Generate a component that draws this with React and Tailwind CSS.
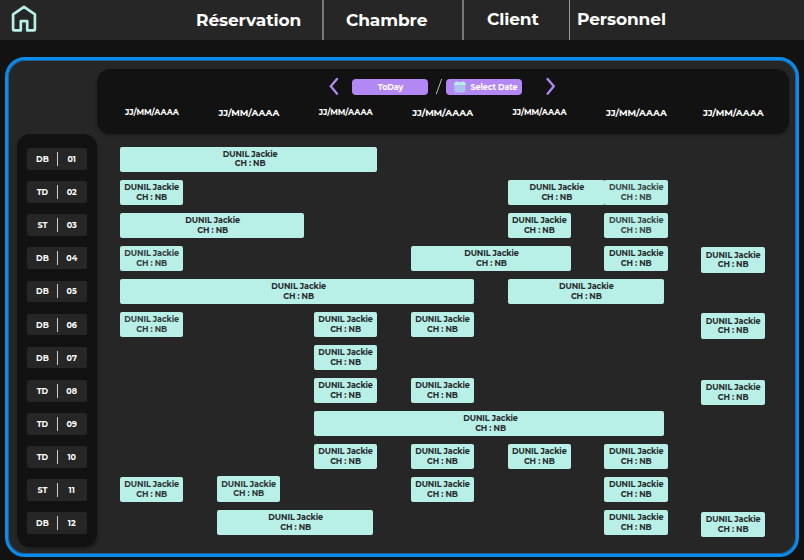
import React from "react";

const ROOMS = ["DB", "TD", "ST", "DB", "DB", "DB", "DB", "TD", "TD", "TD", "ST", "DB"];

// Each booking: [first day column, width, vertical shift, text centre shift, text opacity]
const BOOKINGS = [
  [[1, 257.2, 0, 3]],
  [[1, 63.3], [5, 97.5, 0, 1], [6, 63.5, 0, 0, 0.85]],
  [[1, 184.3, 0, 1], [5, 63.5], [6, 63.5, 0, 0, 0.85]],
  [[1, 63.3, 0, 0, 0.9], [4, 160.5, 0, 1], [6, 63.5], [7, 63.5, 1.7]],
  [[1, 354.2, 0, 3], [5, 156.5, 0, 1]],
  [[1, 63.3, 0, 0, 0.9], [3, 63.5], [4, 63.5], [7, 63.5, 1.7]],
  [[3, 63.5]],
  [[3, 63.5], [4, 63.5], [7, 63.5, 1.7]],
  [[3, 350.5, 0, 3]],
  [[3, 63.5], [4, 63.5], [5, 63.5], [6, 63.5]],
  [[1, 63.3, 0, 0, 0.95], [2, 63.5, -0.6, 0, 0.95], [4, 63.5], [6, 63.5]],
  [[2, 156.5, 0, 1], [6, 63.5], [7, 63.5, 1.7]],
];

function Booking({ booking }) {
  const [column, width, dy = 0, shift = 0, opacity = 1] = booking;
  return (
    <div
      className="row-start-1 flex h-[25.4px] flex-col items-center rounded-[2px] bg-[#b8efe7] pt-[3.4px] text-[8px] leading-[9.6px] font-bold tracking-[-0.1px] whitespace-nowrap text-[#262b2a]"
      style={{ gridColumnStart: column, width, marginTop: dy }}
    >
      <span style={{ opacity, marginLeft: shift }}>DUNIL Jackie</span>
      <span style={{ opacity, marginLeft: shift }}>CH : NB</span>
    </div>
  );
}

function Chevron({ flip }) {
  return (
    <svg className="h-[18px] w-[10px]" viewBox="0 0 10 18" fill="none" stroke="#b388f5" strokeWidth="2.3" strokeLinecap="round">
      <path d={flip ? "M1.6 1.9L7.8 9.3L1.6 16.7" : "M8 1.9L1.8 9.3L8 16.7"} />
    </svg>
  );
}

function CalendarIcon() {
  return (
    <svg className="h-[12px] w-[12px]" viewBox="0 0 12 12">
      <rect x=".3" y="1.2" width="11.2" height="10.3" rx="1.3" fill="#b2bdee" />
      <path d="M.3 4V2.5Q.3 1.2 1.6 1.2H10.2Q11.5 1.2 11.5 2.5V4Z" fill="#b8efe7" />
      <path d="M3 .2V2M8.8 .2V2" stroke="#b8efe7" strokeWidth="1" />
      <path d="M2.4 6H10M2.4 8H10M2.4 10H10" stroke="#9fdde5" strokeWidth="1" strokeDasharray="1 1.2" />
    </svg>
  );
}

export default function App() {
  return (
    <div className="flex h-[560px] w-[804px] flex-col overflow-hidden bg-[#121212] font-['Montserrat','Inter',sans-serif] text-white">
      <header className="flex h-[40px] shrink-0 bg-[#262626] text-[17px] leading-[41px] font-bold tracking-[-0.1px] whitespace-nowrap">
        <svg className="mt-[5px] ml-[11px] h-[27px] w-[26px] shrink-0" viewBox="0 0 26 27" fill="none" stroke="#b8efe7" strokeWidth="2.7" strokeLinejoin="round">
          <path d="M2.1 9.3L13 1.8L23.9 9.3V24.4Q23.9 25.4 22.9 25.4H16.2V16.2H9.8V25.4H3.1Q2.1 25.4 2.1 24.4Z" />
        </svg>
        <nav className="flex">
          <div className="w-[287px] border-r-2 border-[#777] pl-[159px]">Réservation</div>
          <div className="w-[140px] border-r-2 border-[#777] pl-[22px]">Chambre</div>
          <div className="w-[106px] border-r border-[#999] pl-[23px] leading-[39px]">Client</div>
          <div className="pl-[7px] leading-[39px]">Personnel</div>
        </nav>
      </header>

      <main className="mt-[17px] ml-[5px] flex h-[500px] w-[794px] flex-col rounded-[20px] border-[3px] border-[#0b8bea] bg-[#262626] shadow-[inset_0_0_0_1px_#176099]">
        <div className="mt-[9px] ml-[89px] flex h-[65px] w-[692px] shrink-0 flex-col rounded-[13px] bg-[#121212] shadow-[0_2px_3px_rgba(0,0,0,0.25)]">
          <div className="mt-[8px] flex h-[18px] items-center">
            <div className="ml-[231.5px] flex"><Chevron /></div>
            <button className="mt-[2px] ml-[13.5px] h-[16px] w-[76px] rounded-[4px] bg-[#b388f5] pl-[1px] text-center text-[8px] leading-[16px] font-bold tracking-[-0.1px]">ToDay</button>
            <svg className="mt-px ml-[7px] h-[17px] w-[8px]" viewBox="0 0 8 17" stroke="#bbb" strokeWidth="1">
              <path d="M1.3 16L6.7 1" />
            </svg>
            <button className="mt-[2px] ml-[3px] flex h-[16px] w-[76px] items-center gap-[5px] rounded-[4px] bg-[#b388f5] pl-[7.5px] text-[8px] leading-[16px] font-bold tracking-[-0.1px] whitespace-nowrap">
              <CalendarIcon />
              Select Date
            </button>
            <div className="ml-[23.5px] flex"><Chevron flip /></div>
          </div>
          <div className="mt-[9px] grid grid-cols-[repeat(7,96.9px)] pl-[6.5px] text-center leading-[17px] font-bold">
            {[0, 1, 0, 1, 0, 1, 1].map((large, i) => (
              <span key={i} className={large ? "text-[9px] tracking-[-0.1px]" : "text-[8px] tracking-[-0.1px]"}>JJ/MM/AAAA</span>
            ))}
          </div>
        </div>

        <div className="ml-[9px] flex">
          <aside className="flex h-[412.5px] w-[80px] shrink-0 flex-col items-center gap-[11.27px] rounded-[13px] bg-[#121212] pt-[14.3px] shadow-[1px_2px_3px_rgba(0,0,0,0.25)]">
            {ROOMS.map((type, i) => (
              <div key={i} className="flex h-[21.8px] w-[60.6px] shrink-0 items-center rounded-[2px] bg-[#262626] text-center text-[8px] leading-[12px] font-bold">
                <span className="w-[30.5px] pl-[1px]">{type}</span>
                <span className="h-[14px] w-px bg-[#ccc]" />
                <span className="w-[27px]">{String(i + 1).padStart(2, "0")}</span>
              </div>
            ))}
          </aside>
          <div className="flex flex-col pt-[12.5px] pl-[23px]">
            {BOOKINGS.map((row, i) => (
              <div key={i} className="grid h-[33.05px] grid-cols-[repeat(7,96.9px)] items-start">
                {row.map((booking, j) => <Booking key={j} booking={booking} />)}
              </div>
            ))}
          </div>
        </div>
      </main>
    </div>
  );
}
